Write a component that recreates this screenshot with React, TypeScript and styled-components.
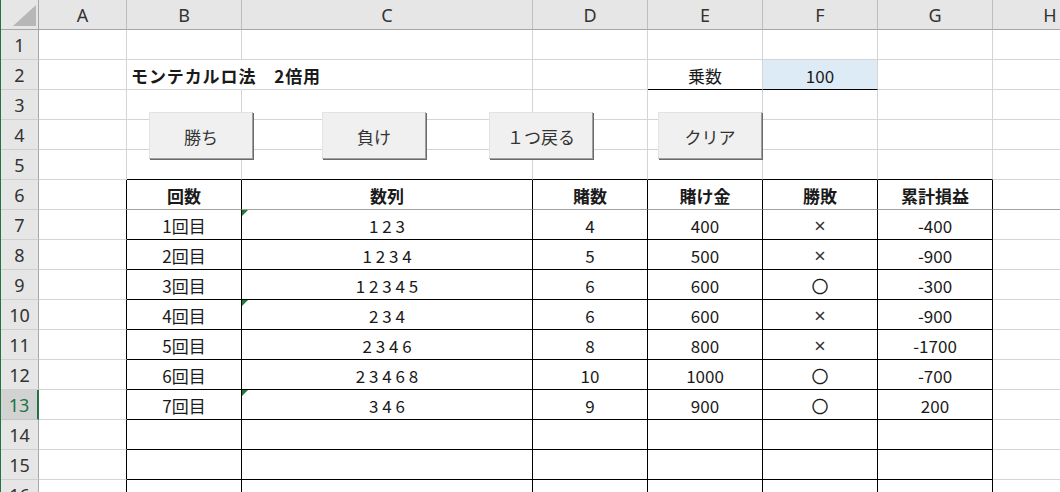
import React from "react";
import styled, { createGlobalStyle } from "styled-components";

const GlobalStyle = createGlobalStyle`
  html, body {
    margin: 0;
    padding: 0;
    background: #ffffff;
    overflow: hidden;
  }
  body {
    font-family: "Noto Sans CJK JP", "Noto Sans", sans-serif;
    color: #1a1a1a;
  }
`;

const GRID = "#d4d4d4";
const BLACK = "#000000";
const FREEZE = "#a3a3a3";

const COLS = ["A", "B", "C", "D", "E", "F", "G", "H"];
const WIDTHS = [88, 115, 291, 115, 115, 115, 115, 115];
const ROW_COUNT = 16;

const Sheet = styled.div`
  position: relative;
  display: grid;
  grid-template-columns: 38px ${WIDTHS.map((w) => `${w}px`).join(" ")};
  grid-auto-rows: 30px;
  width: max-content;
  border-left: 1px solid #217346;
  background: #ffffff;
  font-size: 17px;
`;

const HeaderBase = styled.div`
  box-sizing: border-box;
  display: flex;
  align-items: center;
  justify-content: center;
  background: #e6e6e6;
  color: #333333;
  font-family: "Noto Sans", "Noto Sans CJK JP", sans-serif;
  font-size: 18px;
  padding-top: 1px;
`;

const Corner = styled(HeaderBase)`
  position: relative;
  border-right: 1px solid #a6a6a6;
  border-bottom: 1px solid #a6a6a6;
`;

const CornerMark = styled.svg`
  position: absolute;
  left: 12px;
  top: 5px;
`;

const ColHeader = styled(HeaderBase)`
  border-right: 1px solid #bdbdbd;
  border-bottom: 1px solid #a6a6a6;
`;

const RowHeader = styled(HeaderBase)<{ $selected?: boolean }>`
  background: ${(p) => (p.$selected ? "#d2d2d2" : "#e6e6e6")};
  color: ${(p) => (p.$selected ? "#217346" : "#333333")};
  border-bottom: 1px solid ${(p) => (p.$selected ? "#c4c4c4" : "#cfcfcf")};
  border-right: ${(p) => (p.$selected ? "2px solid #217346" : "1px solid #a6a6a6")};
`;

const Cell = styled.div<{
  $align: "left" | "center";
  $bold?: boolean;
  $bg?: string;
  $rb: string;
  $bb: string;
}>`
  position: relative;
  box-sizing: border-box;
  display: flex;
  align-items: center;
  justify-content: ${(p) => (p.$align === "left" ? "flex-start" : "center")};
  padding: 2px 0 0 ${(p) => (p.$align === "left" ? "4px" : "0")};
  background: ${(p) => p.$bg ?? "transparent"};
  border-right: 1px solid ${(p) => p.$rb};
  border-bottom: 1px solid ${(p) => p.$bb};
  font-weight: ${(p) => (p.$bold ? 700 : 400)};
  letter-spacing: ${(p) => (p.$align === "left" ? "0.9px" : "normal")};
  color: #1a1a1a;
  white-space: nowrap;
  overflow: visible;
  z-index: ${(p) => (p.$align === "left" ? 1 : 0)};
`;

const Cross = styled.span`
  font-family: "Noto Sans", "DejaVu Sans", sans-serif;
  font-size: 20px;
  line-height: 1;
  color: #333333;
`;

const ErrorMark = styled.span`
  position: absolute;
  left: 0;
  top: 0;
  width: 0;
  height: 0;
  border-top: 6px solid #1e7b34;
  border-right: 6px solid transparent;
`;

const FormButton = styled.button<{ $left: number }>`
  position: absolute;
  top: 112px;
  left: ${(p) => p.$left}px;
  width: 104px;
  height: 47px;
  box-sizing: border-box;
  margin: 0;
  padding: 2px 0 0;
  background: #f0f0f0;
  border-top: 1px solid #e3e3e3;
  border-left: 1px solid #e3e3e3;
  border-right: 1px solid #a0a0a0;
  border-bottom: 1px solid #a0a0a0;
  box-shadow: 1px 1px 0 #6a6a6a;
  font-family: "Noto Sans CJK JP", sans-serif;
  font-size: 17px;
  color: #333333;
  z-index: 2;
`;

type CellData = { text?: string; bold?: boolean; align?: "left" | "center"; mark?: boolean };

const tableHead = ["回数", "数列", "賭数", "賭け金", "勝敗", "累計損益"];
const tableRows: string[][] = [
  ["1回目", "1 2 3", "4", "400", "×", "-400"],
  ["2回目", "1 2 3 4", "5", "500", "×", "-900"],
  ["3回目", "1 2 3 4 5", "6", "600", "〇", "-300"],
  ["4回目", "2 3 4", "6", "600", "×", "-900"],
  ["5回目", "2 3 4 6", "8", "800", "×", "-1700"],
  ["6回目", "2 3 4 6 8", "10", "1000", "〇", "-700"],
  ["7回目", "3 4 6", "9", "900", "〇", "200"],
];
const marked = new Set([7, 10, 13]);

function cellData(row: number, col: number): CellData {
  if (row === 2 && col === 1) return { text: "モンテカルロ法　2倍用", bold: true, align: "left" };
  if (row === 2 && col === 4) return { text: "乗数" };
  if (row === 2 && col === 5) return { text: "100" };
  if (row === 6 && col >= 1 && col <= 6) return { text: tableHead[col - 1], bold: true };
  if (row >= 7 && row <= 13 && col >= 1 && col <= 6) {
    return { text: tableRows[row - 7][col - 1], mark: col === 2 && marked.has(row) };
  }
  return {};
}

const inTable = (row: number, col: number) => row >= 6 && col >= 1 && col <= 6;

function rightBorder(row: number, col: number): string {
  if (row === 2 && col === 1) return "transparent";
  if (inTable(row, col)) return BLACK;
  if (row >= 6 && col === 0) return BLACK;
  return GRID;
}

function bottomBorder(row: number, col: number): string {
  if (row === 6 && col >= 1) return FREEZE;
  if (inTable(row, col)) return BLACK;
  if (row === 5 && col >= 1 && col <= 6) return BLACK;
  if (row === 2 && (col === 4 || col === 5)) return BLACK;
  return GRID;
}

const buttons = [
  { label: "勝ち", left: 148 },
  { label: "負け", left: 321 },
  { label: "１つ戻る", left: 488 },
  { label: "クリア", left: 657 },
];

export default function App() {
  const rows = Array.from({ length: ROW_COUNT }, (_, i) => i + 1);
  return (
    <>
      <GlobalStyle />
      <Sheet>
        <Corner>
          <CornerMark width="23" height="21" viewBox="0 0 23 21">
            <polygon points="23,0 23,21 0,21" fill="#b7b7b7" />
          </CornerMark>
        </Corner>
        {COLS.map((c) => (
          <ColHeader key={c}>{c}</ColHeader>
        ))}
        {rows.map((row) => (
          <React.Fragment key={row}>
            <RowHeader $selected={row === 13}>{row}</RowHeader>
            {COLS.map((_, col) => {
              const d = cellData(row, col);
              return (
                <Cell
                  key={col}
                  $align={d.align ?? "center"}
                  $bold={d.bold}
                  $bg={row === 2 && col === 5 ? "#ddebf7" : undefined}
                  $rb={rightBorder(row, col)}
                  $bb={bottomBorder(row, col)}
                >
                  {d.mark && <ErrorMark />}
                  {d.text === "×" ? <Cross>{d.text}</Cross> : d.text}
                </Cell>
              );
            })}
          </React.Fragment>
        ))}
        {buttons.map((b) => (
          <FormButton key={b.label} $left={b.left}>
            {b.label}
          </FormButton>
        ))}
      </Sheet>
    </>
  );
}
